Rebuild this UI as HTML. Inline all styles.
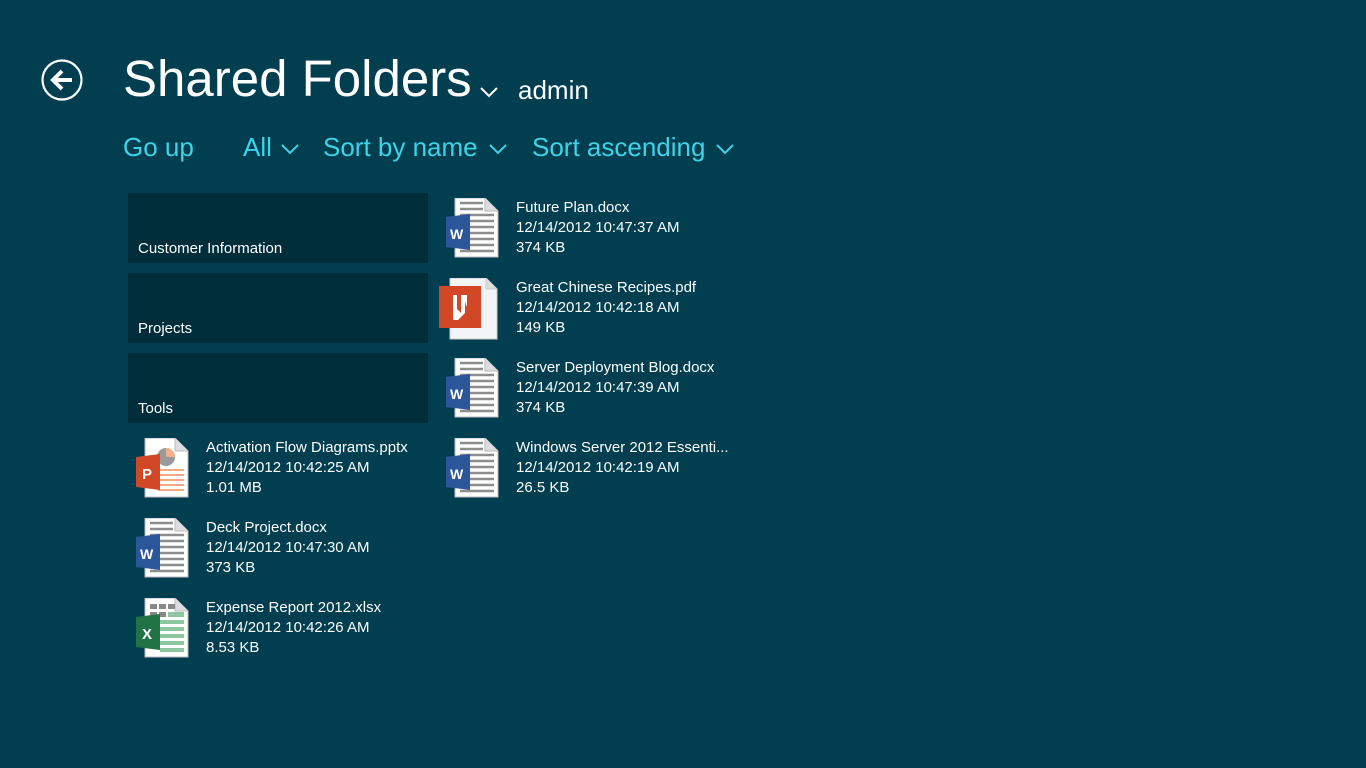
<!DOCTYPE html>
<html><head><meta charset="utf-8"><style>
body{margin:0;width:1366px;height:768px;background:#003e50;font-family:"Liberation Sans",sans-serif;color:#fff;overflow:hidden;position:relative}
.a{position:absolute}
.title{left:123px;top:49px;font-size:51px;letter-spacing:0px;white-space:nowrap}
.admin{left:518px;top:75px;font-size:26px}
.cmd{top:132px;font-size:26px;color:#3fd3e6;white-space:nowrap}
.tile{background:#002d3a;width:300px;height:70px;left:128px}
.tile span{position:absolute;left:10px;bottom:6px;font-size:15px}
.f{font-size:15px;line-height:20px;white-space:nowrap}
</style></head><body>
<svg class="a" style="left:41px;top:59px" width="42" height="42" viewBox="0 0 42 42"><circle cx="21" cy="21" r="19.5" fill="none" stroke="#fff" stroke-width="2.2"/><path d="M31 21H13M21 12l-9 9 9 9" fill="none" stroke="#fff" stroke-width="4"/></svg>
<div class="a title">Shared Folders</div>
<svg class="a" style="left:479px;top:86px" width="20" height="12"><path d="M2 2l8 8 8-8" fill="none" stroke="#fff" stroke-width="2"/></svg>
<div class="a admin">admin</div>
<div class="a cmd" style="left:123px">Go up</div>
<div class="a cmd" style="left:243px">All</div>
<svg class="a" style="left:280px;top:143px" width="20" height="12"><path d="M2 2l8 8 8-8" fill="none" stroke="#3fd3e6" stroke-width="2"/></svg>
<div class="a cmd" style="left:323px">Sort by name</div>
<svg class="a" style="left:488px;top:143px" width="20" height="12"><path d="M2 2l8 8 8-8" fill="none" stroke="#3fd3e6" stroke-width="2"/></svg>
<div class="a cmd" style="left:532px">Sort ascending</div>
<svg class="a" style="left:715px;top:143px" width="20" height="12"><path d="M2 2l8 8 8-8" fill="none" stroke="#3fd3e6" stroke-width="2"/></svg>

<div class="a tile" style="top:193px"><span>Customer Information</span></div>
<div class="a tile" style="top:273px"><span>Projects</span></div>
<div class="a tile" style="top:353px"><span>Tools</span></div>

<svg width="0" height="0" style="position:absolute"><defs>
<g id="page"><path d="M9 0H39L52 13V59H9Z" fill="#fff" stroke="#bbb"/><path d="M39 0V13H52" fill="#ddd" stroke="#bbb"/></g>
<g id="wlines" stroke="#8e8e8e" stroke-width="2.4"><path d="M14 5H37M14 11H37M14 17H48M14 23H48M14 29H48M14 35H48M14 41H48M14 47H48M14 53H48"/></g>
</defs></svg>

<svg class="a" style="left:136px;top:438px" width="54" height="60"><use href="#page"/><circle cx="30" cy="19" r="9" fill="#9a9a9a"/><path d="M30 10a9 9 0 0 1 9 9h-9z" fill="#f4b08a"/><path d="M22 32H48M22 37H48M22 42H48M22 47H48M22 52H48" stroke="#f4a983" stroke-width="2"/><path d="M0 19L24 16V52L0 49Z" fill="#d24726"/><text x="6" y="41" font-size="15" font-weight="bold" fill="#fff" font-family="Liberation Sans">P</text></svg>
<div class="a f" style="left:206px;top:438px">Activation Flow Diagrams.pptx<br>12/14/2012 10:42:25 AM<br>1.01 MB</div>

<svg class="a" style="left:136px;top:518px" width="54" height="60"><use href="#page"/><use href="#wlines"/><path d="M0 19L24 16V52L0 49Z" fill="#2b579a"/><text x="4" y="41" font-size="14" font-weight="bold" fill="#fff" font-family="Liberation Sans">W</text></svg>
<div class="a f" style="left:206px;top:518px">Deck Project.docx<br>12/14/2012 10:47:30 AM<br>373 KB</div>

<svg class="a" style="left:136px;top:598px" width="54" height="60"><use href="#page"/><g fill="#888"><rect x="14" y="6" width="7" height="5"/><rect x="23" y="6" width="7" height="5"/><rect x="32" y="6" width="7" height="5"/><rect x="14" y="14" width="7" height="5"/><rect x="23" y="14" width="7" height="5"/></g><g fill="#8cc7a0"><rect x="32" y="14" width="16" height="5"/><rect x="24" y="22" width="24" height="4"/><rect x="24" y="29" width="24" height="4"/><rect x="24" y="36" width="24" height="4"/><rect x="24" y="43" width="24" height="4"/><rect x="24" y="50" width="24" height="4"/></g><path d="M0 19L24 16V52L0 49Z" fill="#217346"/><text x="6" y="41" font-size="15" font-weight="bold" fill="#fff" font-family="Liberation Sans">X</text></svg>
<div class="a f" style="left:206px;top:598px">Expense Report 2012.xlsx<br>12/14/2012 10:42:26 AM<br>8.53 KB</div>

<svg class="a" style="left:446px;top:198px" width="54" height="60"><use href="#page"/><use href="#wlines"/><path d="M0 19L24 16V52L0 49Z" fill="#2b579a"/><text x="4" y="41" font-size="14" font-weight="bold" fill="#fff" font-family="Liberation Sans">W</text></svg>
<div class="a f" style="left:516px;top:198px">Future Plan.docx<br>12/14/2012 10:47:37 AM<br>374 KB</div>

<svg class="a" style="left:438px;top:278px" width="60" height="62"><path d="M12 0H48L59 11V61H12Z" fill="#f2f4f6" stroke="#ccc"/><path d="M48 0V11H59" fill="#ddd" stroke="#ccc"/><rect x="1" y="8" width="42" height="42" fill="#d24726"/><path d="M15 17h4v14l4 4V17h4v18l-7 7h-5z M24 17h5v12" fill="#fff"/></svg>
<div class="a f" style="left:516px;top:278px">Great Chinese Recipes.pdf<br>12/14/2012 10:42:18 AM<br>149 KB</div>

<svg class="a" style="left:446px;top:358px" width="54" height="60"><use href="#page"/><use href="#wlines"/><path d="M0 19L24 16V52L0 49Z" fill="#2b579a"/><text x="4" y="41" font-size="14" font-weight="bold" fill="#fff" font-family="Liberation Sans">W</text></svg>
<div class="a f" style="left:516px;top:358px">Server Deployment Blog.docx<br>12/14/2012 10:47:39 AM<br>374 KB</div>

<svg class="a" style="left:446px;top:438px" width="54" height="60"><use href="#page"/><use href="#wlines"/><path d="M0 19L24 16V52L0 49Z" fill="#2b579a"/><text x="4" y="41" font-size="14" font-weight="bold" fill="#fff" font-family="Liberation Sans">W</text></svg>
<div class="a f" style="left:516px;top:438px">Windows Server 2012 Essenti...<br>12/14/2012 10:42:19 AM<br>26.5 KB</div>
</body></html>
